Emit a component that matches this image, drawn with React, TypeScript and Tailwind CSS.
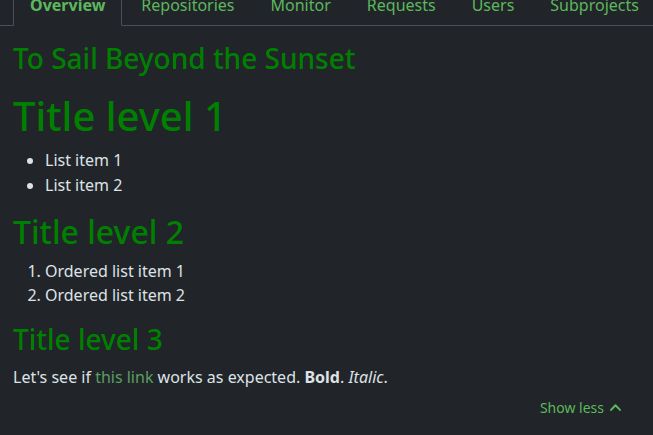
import React from "react";

const tabs = ["Overview", "Repositories", "Monitor", "Requests", "Users", "Subprojects"];

export default function App() {
  return (
    <div
      className="w-[653px] h-[435px] overflow-hidden bg-[#212529] text-[#dee2e6] text-[16px] leading-[24px]"
      style={{ fontFamily: '"Noto Sans", "Open Sans", sans-serif' }}
    >
      <ul className="-mt-4 flex border-b border-[#495057] pl-[13px]">
        {tabs.map((t, i) => (
          <li key={t} className="-mb-px">
            <span
              className={
                i === 0
                  ? "block px-4 py-2 border border-[#495057] border-b-[#212529] rounded-t-[6px] font-bold text-[#5cb85c] bg-[#212529]"
                  : "block px-4 py-2 border border-transparent text-[#5cb85c] ml-[2px]"
              }
            >
              {t}
            </span>
          </li>
        ))}
      </ul>
      <div className="px-[13px] pt-4">
        <h3 className="text-[28px] leading-[33.6px] font-medium text-[#008000] mb-4">To Sail Beyond the Sunset</h3>
        <h1 className="text-[40px] leading-[48px] font-medium text-[#008000] mb-2">Title level 1</h1>
        <ul className="list-disc pl-8 mb-4">
          <li className="leading-[25px]">List item 1</li>
          <li>List item 2</li>
        </ul>
        <h2 className="text-[32px] leading-[38.4px] font-medium text-[#008000] mb-2">Title level 2</h2>
        <ol className="list-decimal pl-8 mb-4">
          <li>Ordered list item 1</li>
          <li>Ordered list item 2</li>
        </ol>
        <h3 className="text-[28px] leading-[33.6px] font-medium text-[#008000] mb-2">Title level 3</h3>
        <p className="mb-1">
          Let's see if <a className="text-[#5a9e62]">this link</a> works as expected.{" "}
          <strong className="font-bold">Bold</strong>. <em className="italic">Italic</em>.
        </p>
        <div className="flex justify-end pr-[18px]">
          <span className="flex items-center gap-[5px] py-[3px] text-[14px] text-[#5cb85c]">
            Show less
            <svg width="13" height="13" viewBox="0 0 16 16" fill="none" stroke="currentColor" strokeWidth="2.4" strokeLinecap="round" strokeLinejoin="round">
              <path d="M2.5 11 L8 5.2 L13.5 11" />
            </svg>
          </span>
        </div>
      </div>
    </div>
  );
}
